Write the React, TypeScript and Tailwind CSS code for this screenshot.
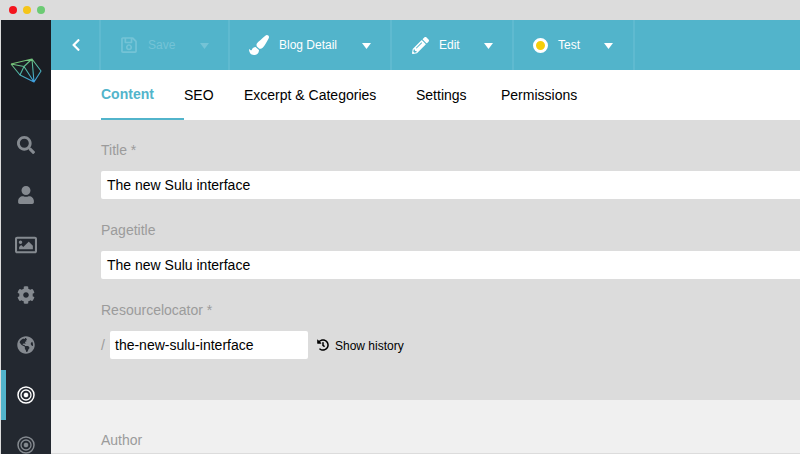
import { FaChevronLeft, FaCog, FaGlobeAmericas, FaHistory, FaPaintBrush, FaPencilAlt, FaRegImage, FaRegSave, FaSearch, FaUser } from "react-icons/fa";
import type { ReactNode } from "react";

const TABS = [
  { label: "Content", width: "w-[83px]", active: true },
  { label: "SEO", width: "w-[60px]" },
  { label: "Excerpt & Categories", width: "w-[172px]" },
  { label: "Settings", width: "w-[85px]" },
  { label: "Permissions", width: "w-[90px]" },
];

function Caret({ className = "text-white" }: { className?: string }) {
  return (
    <svg className={className} width="9" height="6" viewBox="0 0 9 6">
      <path d="M0 0h9L4.500 6z" fill="currentColor" />
    </svg>
  );
}

function Target({ className }: { className: string }) {
  return (
    <svg className={className} width="18" height="18" viewBox="0 0 18 18" fill="none" stroke="currentColor">
      <circle cx="9" cy="9" r="8" strokeWidth="1.500" />
      <circle cx="9" cy="9" r="5" strokeWidth="1.300" />
      <circle cx="9" cy="9" r="2.200" fill="currentColor" strokeWidth="0.300" />
    </svg>
  );
}

function Logo() {
  return (
    <svg className="mt-[2px]" width="32" height="28" viewBox="0 0 32 28" fill="none" strokeWidth="1.100" strokeLinejoin="round">
      <defs>
        <linearGradient id="logo" x1="0.300" y1="0" x2="0.700" y2="1">
          <stop offset="0" stopColor="#7ec46a" />
          <stop offset="0.500" stopColor="#4fb7a8" />
          <stop offset="1" stopColor="#3f9fe0" />
        </linearGradient>
      </defs>
      <path
        d="M1 7 22 2 31 14 24 25 10 18 1 7M1 7 14 9.500 22 2 24 25 14 9.500 10 18M22 2 31 14"
        stroke="url(#logo)"
      />
    </svg>
  );
}

function ToolbarItem({ width, children }: { width: string; children: ReactNode }) {
  return <div className={`${width} h-full flex items-center border-r-2 border-[#5fbad0] shrink-0`}>{children}</div>;
}

function NavIcon({ children, active }: { children: ReactNode; active?: boolean }) {
  return (
    <div className="relative h-[50px] shrink-0 flex items-center justify-center text-[#858a90]">
      {active && <div className="absolute left-0 top-0 w-[5px] h-full bg-[#52b4cb]" />}
      {children}
    </div>
  );
}

function Field({ label, value }: { label: string; value: string }) {
  return (
    <div className="h-[80px]">
      <div className="text-[14px] leading-[20px] text-[#9b9b9b] pt-[20px] h-[51px]">{label}</div>
      <div className="h-[28px] bg-white rounded-l-[2px] pl-[6px] flex items-center text-[14px] text-black">{value}</div>
    </div>
  );
}

export default function App() {
  return (
    <div className="w-[800px] h-[454px] overflow-hidden flex flex-col bg-[#dcdcdc] font-['Liberation_Sans',Arial,sans-serif]">
      {/* Window chrome */}
      <div className="h-[20px] shrink-0 flex items-center gap-[6px] pl-[9px] bg-[#dcdcdc]">
        <span className="w-[8px] h-[8px] rounded-full bg-[#f4151e]" />
        <span className="w-[8px] h-[8px] rounded-full bg-[#f5c518]" />
        <span className="w-[8px] h-[8px] rounded-full bg-[#6ccb74]" />
      </div>

      <div className="flex-1 flex min-h-0 pl-[1px]">
        {/* Sidebar */}
        <div className="w-[50px] shrink-0 flex flex-col overflow-hidden bg-[#232830]">
          <div className="h-[100px] shrink-0 bg-[#1a1d23] flex items-center justify-center">
            <Logo />
          </div>
          <NavIcon><FaSearch size={18} /></NavIcon>
          <NavIcon><FaUser size={18} /></NavIcon>
          <NavIcon><FaRegImage size={22} /></NavIcon>
          <NavIcon><FaCog size={18} /></NavIcon>
          <NavIcon><FaGlobeAmericas size={18} /></NavIcon>
          <NavIcon active><Target className="text-white" /></NavIcon>
          <NavIcon><Target className="text-[#858a90]" /></NavIcon>
        </div>

        <div className="flex-1 min-w-0 flex flex-col">
          {/* Toolbar */}
          <div className="h-[50px] shrink-0 flex bg-[#52b4cb] text-white text-[12px]">
            <ToolbarItem width="w-[50px]">
              <FaChevronLeft size={14} className="ml-[18px]" />
            </ToolbarItem>
            <ToolbarItem width="w-[129px]">
              <div className="flex items-center text-[#74c3d6] ml-[19px]">
                <FaRegSave size={18} />
                <span className="ml-[10px]">Save</span>
                <Caret className="ml-[25px] mt-[1px] text-[#74c3d6]" />
              </div>
            </ToolbarItem>
            <ToolbarItem width="w-[162px]">
              <FaPaintBrush size={20} className="ml-[19px]" />
              <span className="ml-[10px]">Blog Detail</span>
              <Caret className="ml-[25px] mt-[2px]" />
            </ToolbarItem>
            <ToolbarItem width="w-[122px]">
              <FaPencilAlt size={17} className="ml-[20px]" />
              <span className="ml-[10px]">Edit</span>
              <Caret className="ml-[24px] mt-[2px]" />
            </ToolbarItem>
            <ToolbarItem width="w-[121px]">
              <span className="ml-[19px] w-[15px] h-[15px] rounded-full bg-[#f5ce0b] border-[3px] border-white box-border" />
              <span className="ml-[10px]">Test</span>
              <Caret className="ml-[24px] mt-[2px]" />
            </ToolbarItem>
          </div>

          {/* Tabs */}
          <div className="h-[50px] shrink-0 bg-white flex pl-[50px] text-[14px] text-black">
            {TABS.map((tab) => (
              <div
                key={tab.label}
                className={`${tab.width} h-full flex items-center shrink-0 whitespace-nowrap ${
                  tab.active ? "font-bold text-[#52b4cb] border-b-2 border-[#52b4cb]" : ""
                }`}
              >
                {tab.label}
              </div>
            ))}
          </div>

          {/* Form */}
          <div className="h-[280px] shrink-0 pl-[50px] bg-[#dcdcdc]">
            <Field label="Title *" value="The new Sulu interface" />
            <Field label="Pagetitle" value="The new Sulu interface" />
            <div className="text-[14px] leading-[20px] text-[#9b9b9b] pt-[20px] h-[51px]">Resourcelocator *</div>
            <div className="flex items-center h-[28px]">
              <span className="text-[14px] text-[#9b9b9b] w-[9px]">/</span>
              <div className="w-[198px] h-[28px] bg-white rounded-[2px] pl-[5px] flex items-center text-[14px] text-black">
                the-new-sulu-interface
              </div>
              <FaHistory size={12} className="ml-[9px] text-black" />
              <span className="ml-[6px] mt-[1px] text-[12px] text-black">Show history</span>
            </div>
          </div>

          <div className="flex-1 pl-[50px] bg-[#f0f0f0] border-b border-[#dcdcdc] text-[14px] text-[#9b9b9b] pt-[30px]">Author</div>
        </div>
      </div>
    </div>
  );
}
